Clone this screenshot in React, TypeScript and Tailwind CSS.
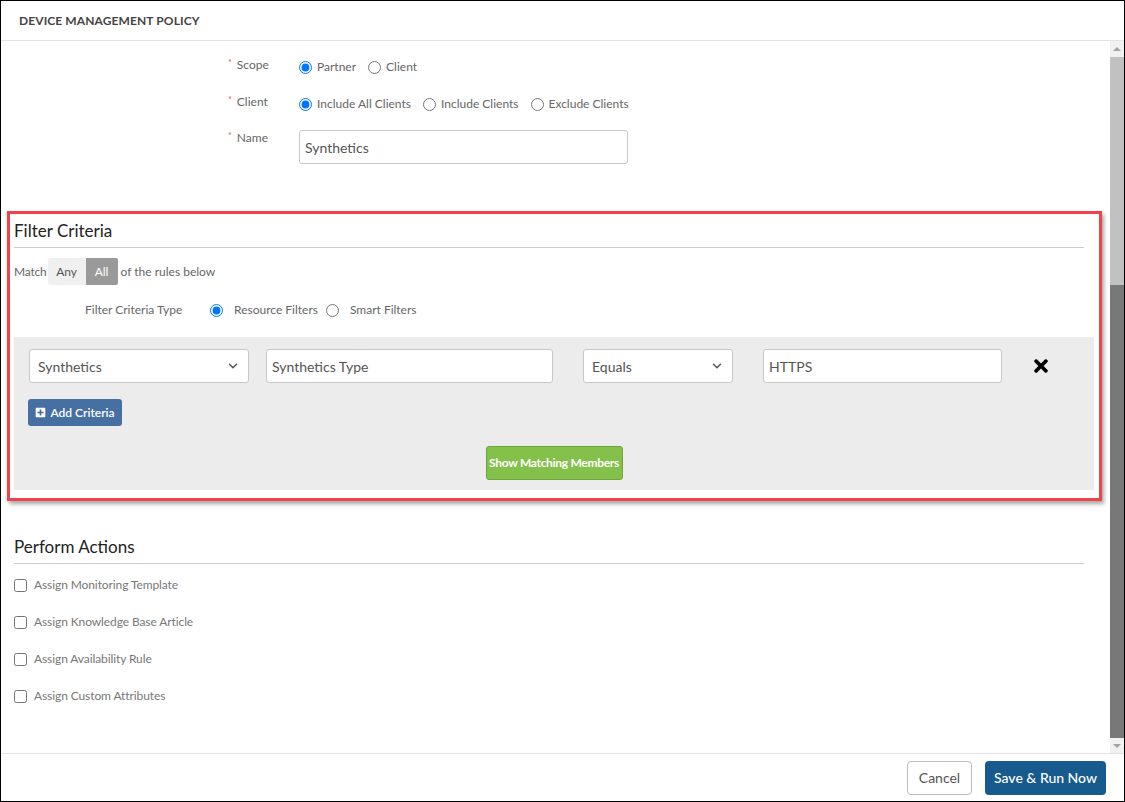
import { FaTimes, FaPlusSquare } from "react-icons/fa";
import { ChevronDown } from "lucide-react";

function Radio({ label, checked = false }: { label: string; checked?: boolean }) {
  return (
    <label className="flex items-center gap-[5px] text-[12px] text-[#666]">
      <input type="radio" defaultChecked={checked} className="h-[13px] w-[13px]" />
      <span>{label}</span>
    </label>
  );
}

function FieldLabel({ text }: { text: string }) {
  return (
    <div className="-mt-[5px] flex w-[71px] items-start text-[12px] text-[#666]">
      <span className="mr-[5px] text-[9px] leading-[12px] text-[#d9534f]">*</span>
      <span className="leading-[16px]">{text}</span>
    </div>
  );
}

function SelectBox({ value, width }: { value: string; width: string }) {
  return (
    <div
      className={`flex h-[34px] ${width} items-center justify-between rounded-[3px] border border-[#c8c8c8] bg-white pl-[8px] pr-[8px] text-[14px] text-[#555]`}
    >
      <span>{value}</span>
      <ChevronDown size={14} strokeWidth={2.5} className="text-[#555]" />
    </div>
  );
}

function TextBox({ value, width }: { value: string; width: string }) {
  return (
    <div
      className={`flex h-[34px] ${width} items-center rounded-[3px] border border-[#c8c8c8] bg-white px-[5px] text-[14px] text-[#555]`}
    >
      {value}
    </div>
  );
}

function ActionCheck({ label }: { label: string }) {
  return (
    <label className="flex h-[20px] items-center gap-[7px] text-[12px] tracking-[-0.1px] text-[#777]">
      <input type="checkbox" className="h-[13px] w-[13px]" />
      <span>{label}</span>
    </label>
  );
}

export default function App() {
  return (
    <div
      className="flex h-[802px] w-full flex-col border border-black bg-white"
      style={{ fontFamily: "Lato, 'Liberation Sans', sans-serif" }}
    >
      {/* HEADER */}
      <header className="flex h-[40px] shrink-0 items-center border-b border-[#e3e3e3] px-[18px]">
        <h1 className="text-[12px] font-bold tracking-[0.1px] text-[#444]">DEVICE MANAGEMENT POLICY</h1>
      </header>

      {/* BODY */}
      <div className="flex min-h-0 flex-1">
        <div className="relative flex-1 overflow-hidden">
          {/* policy fields */}
          <div className="ml-[227px] mt-[16px] flex flex-col">
            <div className="flex h-[20px] items-center">
              <FieldLabel text="Scope" />
              <div className="flex items-center gap-[12px]">
                <Radio label="Partner" checked />
                <Radio label="Client" />
              </div>
            </div>
            <div className="mt-[17px] flex h-[20px] items-center">
              <FieldLabel text="Client" />
              <div className="flex items-center gap-[12px]">
                <Radio label="Include All Clients" checked />
                <Radio label="Include Clients" />
                <Radio label="Exclude Clients" />
              </div>
            </div>
            <div className="mt-[16px] flex items-start">
              <div className="pt-[5px]">
                <FieldLabel text="Name" />
              </div>
              <TextBox value="Synthetics" width="w-[329px]" />
            </div>
          </div>

          {/* FILTER CRITERIA */}
          <section className="ml-[13px] mr-[16px] mt-[55px]">
            <h2 className="mr-[10px] border-b border-[#cfcfcf] pb-[4px] text-[17px] leading-[24px] text-[#222]">
              Filter Criteria
            </h2>
            <div className="mt-[10px] flex items-center text-[12px] text-[#666]">
              <span className="mr-[1px] tracking-[-0.2px]">Match</span>
              <div className="flex h-[27px] overflow-hidden rounded-[2px]">
                <button className="w-[38px] bg-[#f0f0f0] text-[#555]">Any</button>
                <button className="w-[32px] bg-[#9a9a9a] text-white">All</button>
              </div>
              <span className="ml-[3px]">of the rules below</span>
            </div>
            <div className="mt-[15px] flex h-[20px] items-center pl-[71px] text-[12px] text-[#666]">
              <span className="w-[125px]">Filter Criteria Type</span>
              <div className="flex items-center gap-[8px]">
                <label className="flex items-center gap-[11px]">
                  <input type="radio" defaultChecked className="h-[13px] w-[13px]" />
                  <span>Resource Filters</span>
                </label>
                <label className="flex items-center gap-[11px]">
                  <input type="radio" className="h-[13px] w-[13px]" />
                  <span>Smart Filters</span>
                </label>
              </div>
            </div>

            <div className="mt-[17px] bg-[#ececec] px-[15px] pb-[10px] pt-[12px]">
              <div className="flex items-center">
                <SelectBox value="Synthetics" width="w-[220px]" />
                <div className="ml-[17px]">
                  <TextBox value="Synthetics Type" width="w-[287px]" />
                </div>
                <div className="ml-[30px]">
                  <SelectBox value="Equals" width="w-[150px]" />
                </div>
                <div className="ml-[30px]">
                  <TextBox value="HTTPS" width="w-[239px]" />
                </div>
                <FaTimes className="ml-[29px] text-black" size={20} />
              </div>
              <button className="-ml-[1px] mt-[16px] flex h-[27px] w-[94px] items-center justify-center gap-[4px] rounded-[3px] bg-[#4670a2] text-[12px] font-semibold text-white">
                <FaPlusSquare size={11} />
                Add Criteria
              </button>
              <div className="mt-[20px] flex justify-center">
                <button className="h-[34px] w-[137px] rounded-[3px] border border-[#6ea63c] bg-[#84c14a] text-[12px] font-bold tracking-[-0.3px] text-white">
                  Show Matching Members
                </button>
              </div>
            </div>
          </section>

          {/* PERFORM ACTIONS */}
          <section className="ml-[13px] mr-[26px] mt-[45px]">
            <h2 className="border-b border-[#cfcfcf] pb-[4px] text-[17px] leading-[24px] text-[#222]">
              Perform Actions
            </h2>
            <div className="mt-[11px] flex flex-col gap-[17px]">
              <ActionCheck label="Assign Monitoring Template" />
              <ActionCheck label="Assign Knowledge Base Article" />
              <ActionCheck label="Assign Availability Rule" />
              <ActionCheck label="Assign Custom Attributes" />
            </div>
          </section>

          {/* annotation frame around filter criteria */}
          <div className="pointer-events-none absolute left-[6px] top-[170px] h-[290px] w-[1095px] border-[3px] border-[#f04349] shadow-[2px_3px_4px_rgba(0,0,0,0.35)]" />
        </div>

        {/* scrollbar */}
        <div className="flex w-[14px] shrink-0 flex-col bg-[#f1f1f1]">
          <div className="flex h-[16px] items-center justify-center">
            <div className="h-0 w-0 border-x-[4px] border-b-[4px] border-x-transparent border-b-[#a3a3a3]" />
          </div>
          <div className="h-[228px] bg-[#c1c1c1]" />
          <div className="flex-1 bg-[#787878]" />
          <div className="flex h-[15px] items-center justify-center">
            <div className="h-0 w-0 border-x-[4px] border-t-[4px] border-x-transparent border-t-[#a3a3a3]" />
          </div>
        </div>
      </div>

      {/* FOOTER */}
      <footer className="flex h-[48px] shrink-0 items-center justify-end gap-[13px] border-t border-[#e3e3e3] pr-[18px]">
        <button className="h-[34px] w-[65px] rounded-[4px] border border-[#bdbdbd] bg-white text-[14px] text-[#555]">
          Cancel
        </button>
        <button className="h-[34px] w-[121px] rounded-[4px] bg-[#175a8e] text-[14px] font-medium text-white">
          Save &amp; Run Now
        </button>
      </footer>
    </div>
  );
}
